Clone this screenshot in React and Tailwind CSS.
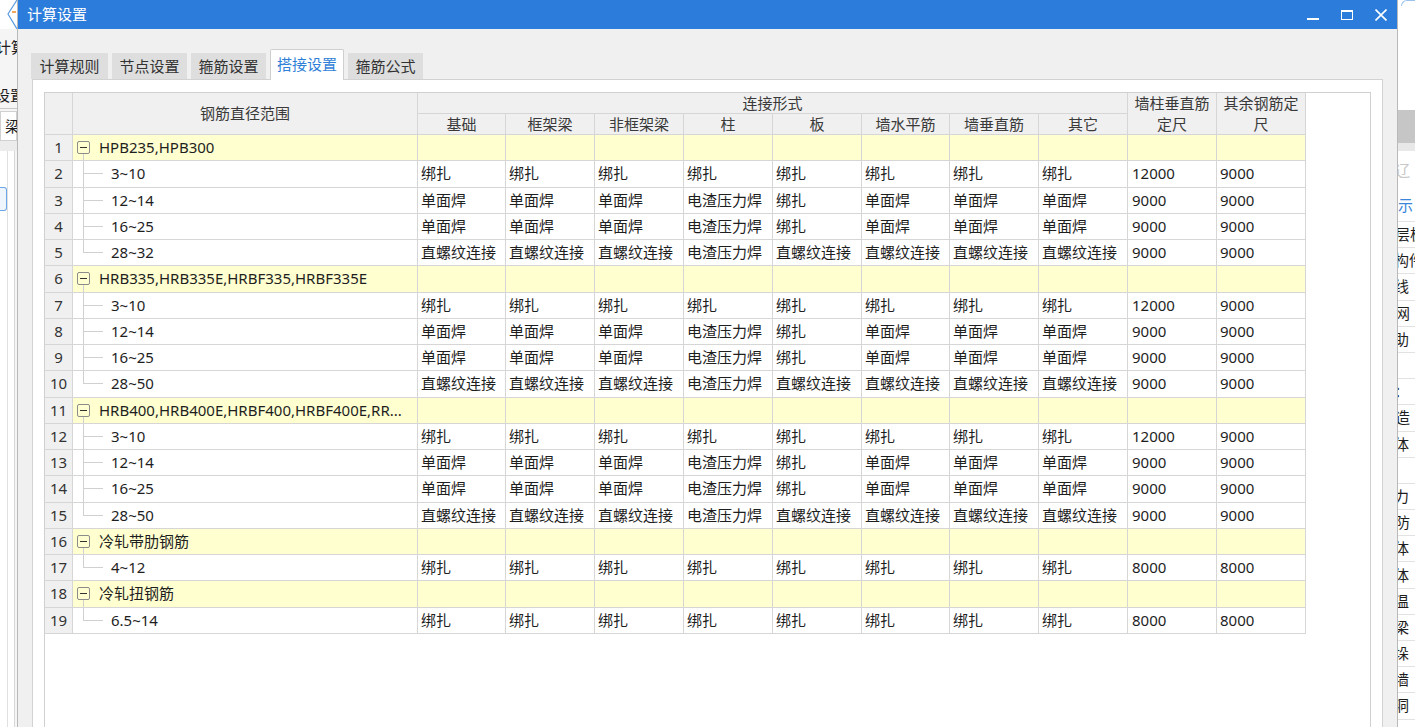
import React from "react";

const A = Array(8).fill("绑扎");
const B = ["单面焊", "单面焊", "单面焊", "电渣压力焊", "绑扎", "单面焊", "单面焊", "单面焊"];
const C = ["直螺纹连接", "直螺纹连接", "直螺纹连接", "电渣压力焊", "直螺纹连接", "直螺纹连接", "直螺纹连接", "直螺纹连接"];

const groups = [
  {
    name: "HPB235,HPB300",
    rows: [
      ["3~10", A, "12000", "9000"],
      ["12~14", B, "9000", "9000"],
      ["16~25", B, "9000", "9000"],
      ["28~32", C, "9000", "9000"],
    ],
  },
  {
    name: "HRB335,HRB335E,HRBF335,HRBF335E",
    rows: [
      ["3~10", A, "12000", "9000"],
      ["12~14", B, "9000", "9000"],
      ["16~25", B, "9000", "9000"],
      ["28~50", C, "9000", "9000"],
    ],
  },
  {
    name: "HRB400,HRB400E,HRBF400,HRBF400E,RR...",
    rows: [
      ["3~10", A, "12000", "9000"],
      ["12~14", B, "9000", "9000"],
      ["16~25", B, "9000", "9000"],
      ["28~50", C, "9000", "9000"],
    ],
  },
  { name: "冷轧带肋钢筋", rows: [["4~12", A, "8000", "8000"]] },
  { name: "冷轧扭钢筋", rows: [["6.5~14", A, "8000", "8000"]] },
];

// flatten groups into table rows
const rows = [];
groups.forEach((g) => {
  rows.push({ type: "group", name: g.name });
  g.rows.forEach((r, i) => {
    rows.push({ type: "child", range: r[0], cells: r[1], a: r[2], b: r[3], last: i === g.rows.length - 1 });
  });
});

const subHeads = ["基础", "框架梁", "非框架梁", "柱", "板", "墙水平筋", "墙垂直筋", "其它"];

const cell = "border-r border-b border-[#d6d6d6] flex items-center";
const head = "border-r border-b border-[#d6d6d6] bg-[#f0f0f0] text-[#3a3a3a] flex items-center justify-center";

const sideRows = [
  { t: "示", c: "text-[#3b86d9]", h: "h-[32px]" },
  { t: "层板", c: "-ml-[3px]" },
  { t: "构件", c: "-ml-[4px]" },
  { t: "线", c: "-ml-[4px]" },
  { t: "网", c: "-ml-[3px]" },
  { t: "助", c: "-ml-[4px]" },
  { t: "", c: "" },
  { t: "：", c: "-ml-[4px]" },
  { t: "造", c: "-ml-[3px]" },
  { t: "体", c: "-ml-[4px]" },
  { t: "", c: "" },
  { t: "力", c: "-ml-[4px]" },
  { t: "防", c: "-ml-[3px]" },
  { t: "体", c: "-ml-[4px]" },
  { t: "体", c: "-ml-[4px]" },
  { t: "温", c: "-ml-[4px]" },
  { t: "梁", c: "-ml-[4px]" },
  { t: "垛", c: "-ml-[4px]" },
  { t: "墙", c: "-ml-[4px]" },
  { t: "洞", c: "-ml-[4px]" },
];

const GroupName = ({ name }) => (
  <div className="flex h-full items-stretch pl-[4px]">
    <div className="flex w-[13px] shrink-0 flex-col">
      <div className="flex-1" />
      <div className="flex h-[13px] items-center justify-center rounded-[2px] border border-[#8c8c8c]">
        <div className="h-px w-[7px] bg-[#333]" />
      </div>
      <div className="ml-[6px] flex-1 border-l border-[#d0d0d0]" />
    </div>
    <span className="ml-[9px] self-center whitespace-nowrap">{name}</span>
  </div>
);

const ChildName = ({ range, last }) => (
  <div className="flex h-full items-stretch">
    <div className="w-[10px] shrink-0" />
    <div className="flex w-[20px] shrink-0 flex-col">
      <div className="flex-1 border-b border-l border-[#d0d0d0]" />
      <div className={last ? "flex-1" : "flex-1 border-l border-[#d0d0d0]"} />
    </div>
    <span className="ml-[8px] self-center whitespace-nowrap">{range}</span>
  </div>
);

export default function App() {
  return (
    <div className="flex h-[727px] w-[1415px] overflow-hidden bg-white font-['Noto_Sans','Noto_Sans_CJK_SC',sans-serif] text-[15px] text-[#1e1e1e]">
      {/* background app, left edge */}
      <div className="flex w-[17px] shrink-0 flex-col overflow-hidden bg-[#f5f5f5]">
        <div className="h-[29px] bg-white">
          <svg width="17" height="29" viewBox="0 0 17 29">
            <polyline points="17,0 8,14 17,29" fill="none" stroke="#5b9be0" strokeWidth="1.2" />
            <line x1="12" y1="12" x2="16" y2="12" stroke="#f08a24" strokeWidth="1.5" />
          </svg>
        </div>
        <div className="mt-[8px] -ml-[4px] whitespace-nowrap leading-[20px]">计算</div>
        <div className="mt-[28px] -ml-[5px] whitespace-nowrap leading-[20px]">设置</div>
        <div className="mt-[3px] border-b border-[#c8c8c8]" />
        <div className="mt-[2px] h-[30px] border border-[#d0d0d0] bg-white pl-[4px] leading-[28px]">梁</div>
        <div className="h-[10px] bg-[#ececec]" />
        <div className="flex flex-1">
          <div className="w-[8px] border-r border-[#e0e0e0] bg-white pt-[36px]">
            <div className="h-[24px] w-[7px] rounded-r-[3px] border border-l-0 border-[#6aa6e8] bg-[#eef5fd]" />
          </div>
          <div className="w-[7px] border-r border-[#d8d8d8] bg-white" />
        </div>
      </div>

      {/* dialog */}
      <div className="flex w-[1381px] shrink-0 flex-col border-x border-[#b9b9b9]">
        <div className="flex h-[29px] shrink-0 items-center bg-[#2c7ddb] pl-[9px] text-white">
          <span className="leading-none">计算设置</span>
          <div className="ml-auto flex h-full">
            <div className="flex w-[34px] items-center justify-center">
              <svg width="12" height="12" viewBox="0 0 12 12">
                <rect x="0" y="9" width="12" height="2" fill="white" />
              </svg>
            </div>
            <div className="flex w-[34px] items-center justify-center">
              <svg width="12" height="12" viewBox="0 0 12 12">
                <rect x="0.5" y="1.5" width="11" height="9" fill="none" stroke="white" strokeWidth="1" />
                <rect x="0" y="1" width="12" height="2" fill="white" />
              </svg>
            </div>
            <div className="flex w-[33px] items-center justify-center">
              <svg width="12" height="12" viewBox="0 0 12 12">
                <path d="M0.5 0.5 L11.5 11.5 M11.5 0.5 L0.5 11.5" stroke="white" strokeWidth="1.6" />
              </svg>
            </div>
          </div>
        </div>

        <div className="flex flex-1 flex-col bg-[#f0f0f0] pt-[20px]">
          {/* tabs */}
          <div className="flex h-[30px] items-end gap-[4px] pl-[13px]">
            <div className="flex h-[26px] w-[77px] items-center justify-center bg-[#dedede] text-[#333]">计算规则</div>
            <div className="flex h-[26px] w-[75px] items-center justify-center bg-[#dedede] text-[#333]">节点设置</div>
            <div className="flex h-[26px] w-[75px] items-center justify-center bg-[#dedede] text-[#333]">箍筋设置</div>
            <div className="relative z-10 -mb-px flex h-[31px] w-[74px] items-center justify-center rounded-t-[2px] border border-b-0 border-[#cfcfcf] bg-white pb-[1px] text-[#2f7fd8]">
              搭接设置
            </div>
            <div className="flex h-[26px] w-[75px] items-center justify-center bg-[#dedede] text-[#333]">箍筋公式</div>
          </div>

          {/* tab panel */}
          <div className="ml-[14px] mr-[14px] flex flex-1 flex-col border border-b-0 border-[#d2d2d2] bg-white pl-[11px] pr-[11px] pt-[12px]">
            <div className="flex-1 border border-b-0 border-[#d0d0d0]">
              <div className="grid grid-cols-[28px_345px_88px_89px_89px_89px_89px_88px_89px_89px_89px_89px] grid-rows-[21px_21px_repeat(19,26.25px)] leading-[21px]">
                <div className={`${head} row-span-2`} />
                <div className={`${head} row-span-2`}>钢筋直径范围</div>
                <div className={`${head} col-span-8`}>连接形式</div>
                <div className={`${head} row-span-2 flex-col`}>
                  <span>墙柱垂直筋</span>
                  <span>定尺</span>
                </div>
                <div className={`${head} row-span-2 flex-col`}>
                  <span>其余钢筋定</span>
                  <span>尺</span>
                </div>
                {subHeads.map((h) => (
                  <div key={h} className={head}>
                    {h}
                  </div>
                ))}

                {rows.map((r, i) =>
                  r.type === "group" ? (
                    <React.Fragment key={i}>
                      <div className={`${cell} justify-center bg-[#f0f0f0] text-[#333]`}>{i + 1}</div>
                      <div className={`${cell} bg-[#ffffd0]`}>
                        <GroupName name={r.name} />
                      </div>
                      {Array.from({ length: 10 }).map((_, j) => (
                        <div key={j} className={`${cell} bg-[#ffffd0]`} />
                      ))}
                    </React.Fragment>
                  ) : (
                    <React.Fragment key={i}>
                      <div className={`${cell} justify-center bg-[#f0f0f0] text-[#333]`}>{i + 1}</div>
                      <div className={`${cell} items-stretch`}>
                        <ChildName range={r.range} last={r.last} />
                      </div>
                      {r.cells.map((c, j) => (
                        <div key={j} className={`${cell} whitespace-nowrap pl-[3px]`}>
                          {c}
                        </div>
                      ))}
                      <div className={`${cell} pl-[4px]`}>{r.a}</div>
                      <div className={`${cell} pl-[3px]`}>{r.b}</div>
                    </React.Fragment>
                  )
                )}
              </div>
            </div>
          </div>
        </div>
      </div>

      {/* background app, right edge */}
      <div className="flex w-[17px] shrink-0 flex-col overflow-hidden bg-white">
        <div className="h-[110px]">
          <div className="ml-[3px] h-[6px] rounded-tl-[6px] border-l border-t border-[#9cc3ee]" />
        </div>
        <div className="h-[33px] bg-[#c6c6c6]" />
        <div className="h-[8px] bg-[#e8e8e8]" />
        <div className="flex h-[39px] items-center -ml-[3px] text-[#c8c8c8]">辽</div>
        {sideRows.map((s, i) => (
          <div
            key={i}
            className={`flex ${s.h || "h-[26.2px]"} shrink-0 items-center whitespace-nowrap border-b border-[#e2e2e2] leading-none ${s.c}`}
          >
            {s.t}
          </div>
        ))}
      </div>
    </div>
  );
}
